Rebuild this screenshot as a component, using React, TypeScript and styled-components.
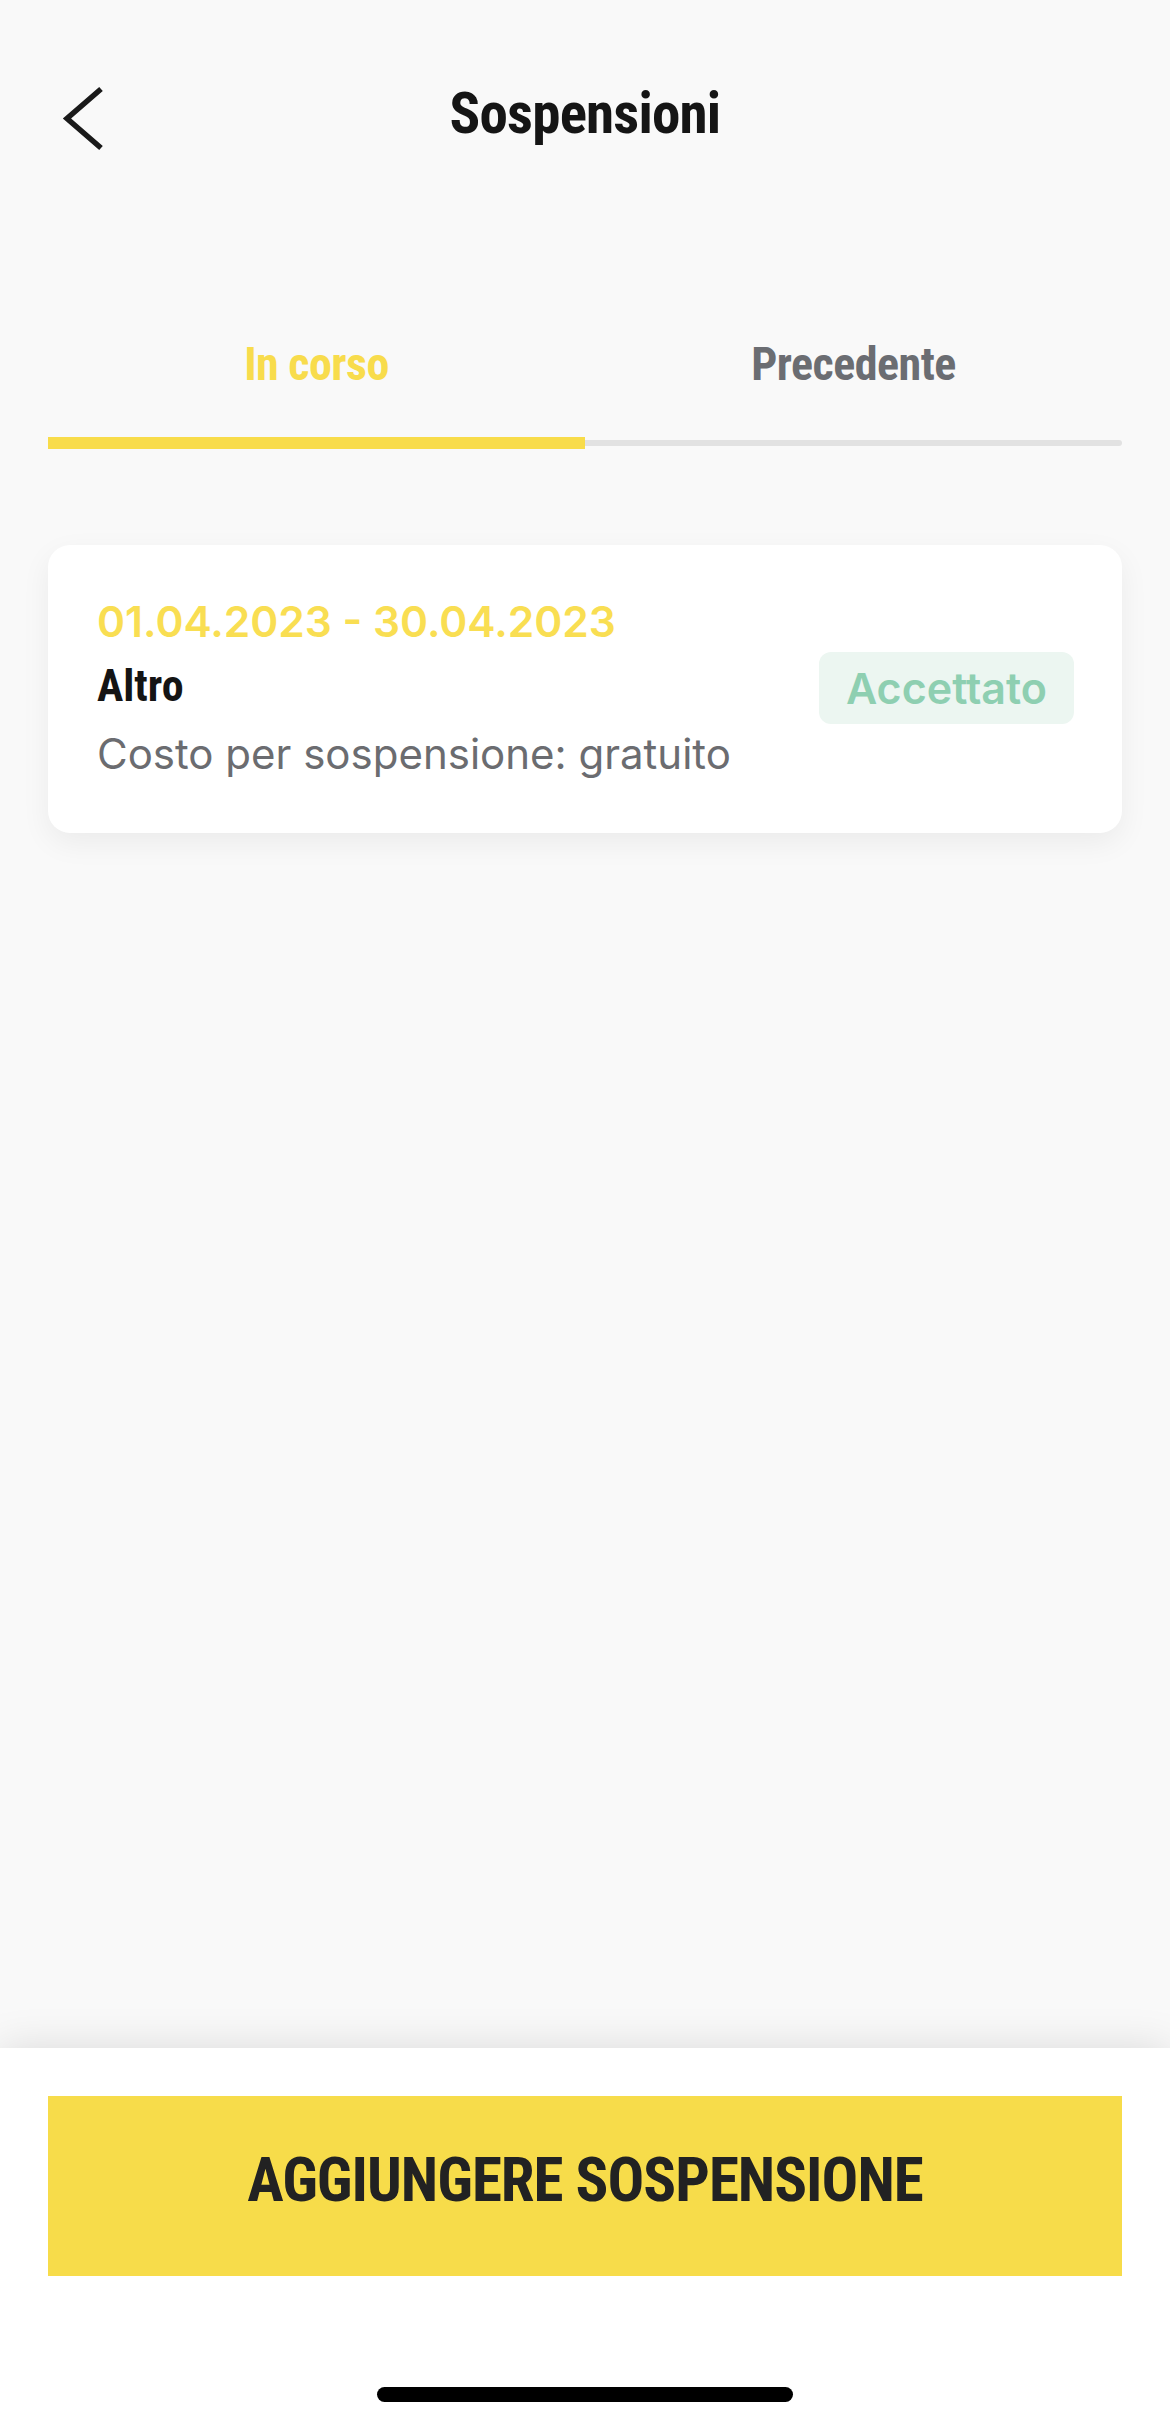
import React, { useState } from "react";
import styled, { createGlobalStyle } from "styled-components";

const condensed = `"Roboto Condensed", "Open Sans Condensed", "DejaVu Sans Condensed", sans-serif`;
const sans = `Inter, "Noto Sans", "Liberation Sans", sans-serif`;

const GlobalStyle = createGlobalStyle`
  html, body {
    margin: 0;
    padding: 0;
    background: #f9f9f9;
  }
  * { box-sizing: border-box; }
`;

const Page = styled.div`
  width: 1170px;
  min-height: 2426px;
  display: flex;
  flex-direction: column;
  background: #f9f9f9;
`;

const Header = styled.header`
  height: 227px;
  display: grid;
  grid-template-columns: 1fr auto 1fr;
  align-items: center;
  padding: 0 62px;
`;

const BackButton = styled.button`
  justify-self: start;
  background: none;
  border: 0;
  padding: 0;
  margin-top: 11px;
  width: 44px;
  height: 68px;
  cursor: pointer;
  display: flex;
`;

const Title = styled.h1`
  margin: 0;
  font-family: ${condensed};
  font-weight: 700;
  font-size: 57px;
  letter-spacing: -0.8px;
  color: #151515;
  line-height: 1;
`;

const Tabs = styled.nav`
  margin: 107px 48px 0;
  display: flex;
`;

const Tab = styled.div`
  flex: 1;
  display: flex;
  flex-direction: column;
  gap: 43px;
  cursor: pointer;
`;

const TabLabel = styled.span<{ $active?: boolean }>`
  display: block;
  text-align: center;
  font-family: ${condensed};
  font-weight: 700;
  font-size: 46px;
  line-height: 60px;
  letter-spacing: -0.5px;
  color: ${(p) => (p.$active ? "#f8dc4c" : "#6b6d72")};
`;

const TabTrack = styled.div`
  height: 12px;
  display: flex;
  align-items: center;
`;

const TabLine = styled.div<{ $active?: boolean; $last?: boolean }>`
  flex: 1;
  height: ${(p) => (p.$active ? "12px" : "6px")};
  background: ${(p) => (p.$active ? "#f8dc4a" : "#e2e2e2")};
  border-radius: ${(p) => (p.$last && !p.$active ? "0 3px 3px 0" : "0")};
`;

const Content = styled.main`
  flex: 1;
  padding: 96px 48px 0;
`;

const Card = styled.article`
  background: #ffffff;
  border-radius: 22px;
  box-shadow: 0 10px 30px rgba(0, 0, 0, 0.06);
  padding: 51px 48px 53px 49px;
  display: flex;
  align-items: center;
  justify-content: space-between;
`;

const CardInfo = styled.div`
  display: flex;
  flex-direction: column;
`;

const DateRange = styled.div`
  font-family: ${sans};
  font-weight: 600;
  font-size: 42.5px;
  line-height: 52px;
  color: #f9de52;
`;

const Reason = styled.div`
  margin-top: 12px;
  font-family: ${condensed};
  font-weight: 700;
  font-size: 44px;
  line-height: 52px;
  color: #141414;
`;

const Cost = styled.div`
  margin-top: 16px;
  font-family: ${sans};
  font-weight: 400;
  font-size: 42px;
  line-height: 52px;
  color: #6b6c70;
`;

const Badge = styled.span`
  height: 72px;
  width: 255px;
  border-radius: 12px;
  background: #ecf6f1;
  color: #8ecfb1;
  font-family: ${sans};
  font-weight: 600;
  font-size: 43px;
  display: flex;
  align-items: center;
  justify-content: center;
`;

const BottomPanel = styled.footer`
  background: #ffffff;
  box-shadow: 0 0 40px rgba(0, 0, 0, 0.13);
  padding: 48px 48px 24px;
  display: flex;
  flex-direction: column;
  align-items: center;
`;

const PrimaryButton = styled.button`
  width: 100%;
  height: 180px;
  border: 0;
  border-radius: 0;
  background: #f7dc4a;
  color: #222222;
  font-family: ${condensed};
  font-weight: 700;
  font-size: 61px;
  letter-spacing: -1px;
  display: flex;
  align-items: center;
  justify-content: center;
  padding: 0 0 12px;
  cursor: pointer;
`;

const HomeIndicator = styled.div`
  margin-top: 111px;
  width: 416px;
  height: 15px;
  border-radius: 8px;
  background: #000000;
`;

export default function App() {
  const [active, setActive] = useState(0);
  const tabs = ["In corso", "Precedente"];
  return (
    <>
      <GlobalStyle />
      <Page>
        <Header>
          <BackButton aria-label="Indietro">
            <svg width="44" height="68" viewBox="0 0 44 68" fill="none">
              <path d="M39 4 L5 33.5 L39 63" stroke="#1a1a1a" strokeWidth="5.5" />
            </svg>
          </BackButton>
          <Title>Sospensioni</Title>
          <span />
        </Header>
        <Tabs>
          {tabs.map((t, i) => (
            <Tab key={t} onClick={() => setActive(i)}>
              <TabLabel $active={active === i}>{t}</TabLabel>
              <TabTrack>
                <TabLine $active={active === i} $last={i === tabs.length - 1} />
              </TabTrack>
            </Tab>
          ))}
        </Tabs>
        <Content>
          <Card>
            <CardInfo>
              <DateRange>01.04.2023 - 30.04.2023</DateRange>
              <Reason>Altro</Reason>
              <Cost>Costo per sospensione: gratuito</Cost>
            </CardInfo>
            <Badge>Accettato</Badge>
          </Card>
        </Content>
        <BottomPanel>
          <PrimaryButton>AGGIUNGERE SOSPENSIONE</PrimaryButton>
          <HomeIndicator />
        </BottomPanel>
      </Page>
    </>
  );
}
